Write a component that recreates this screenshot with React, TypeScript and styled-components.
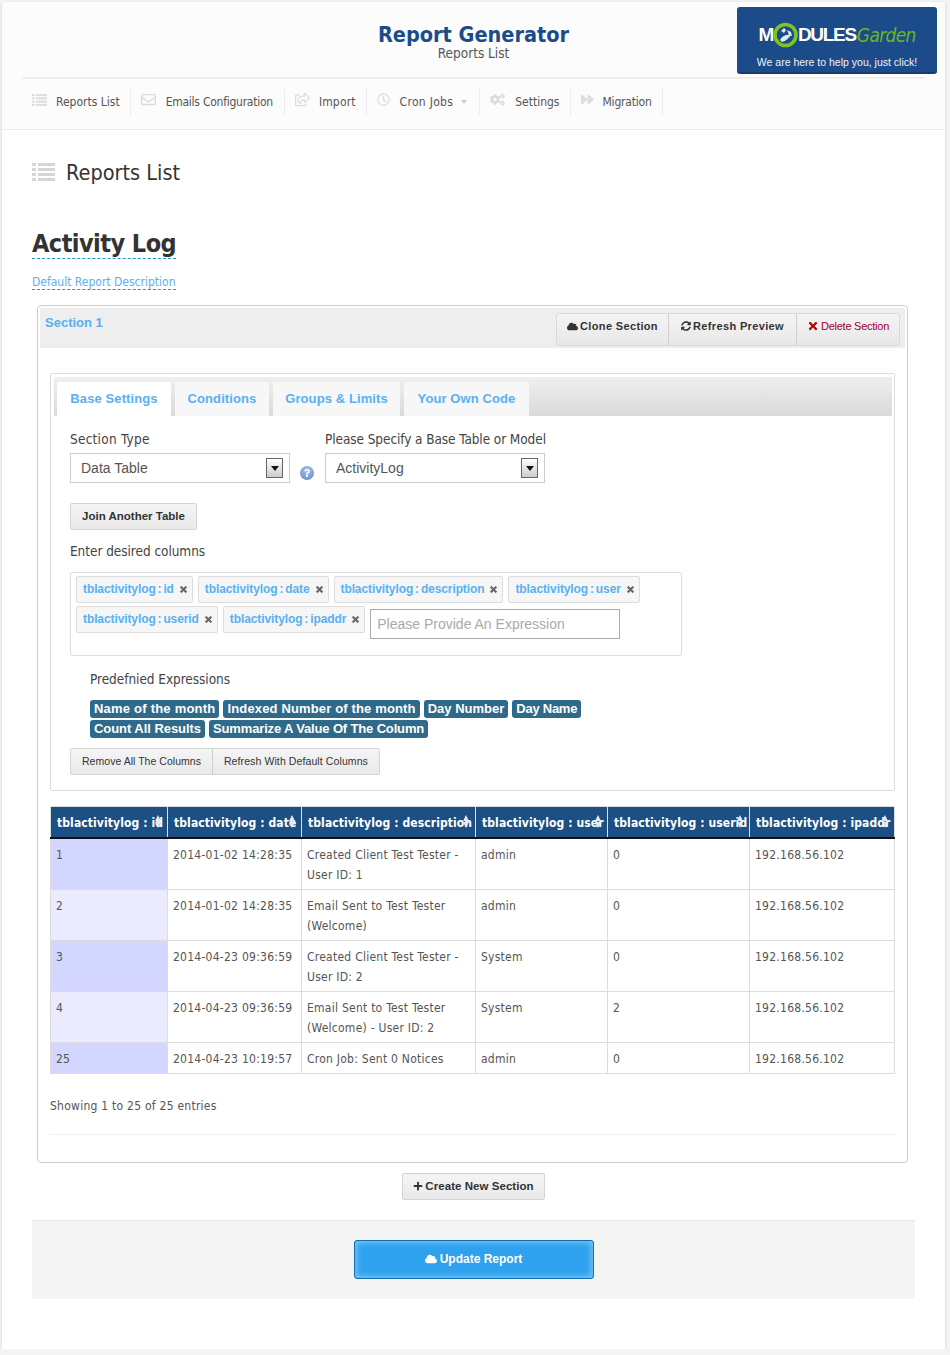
import React from 'react';
import styled, { createGlobalStyle } from 'styled-components';
import { FaRegEnvelope, FaRegShareSquare, FaRegClock, FaCogs, FaForward, FaCloud, FaSyncAlt, FaTimes, FaPlus, FaQuestion } from 'react-icons/fa';

const tahoma = `"DejaVu Sans Condensed", "DejaVu Sans", sans-serif`;
const arial = `"Liberation Sans", Arial, sans-serif`;

const Global = createGlobalStyle`
  html, body { margin: 0; padding: 0; background: #f4f4f4; }
  body { font-family: ${tahoma}; font-stretch: condensed; color: #444; font-size: 12px; }
  * { box-sizing: border-box; }
`;

const Page = styled.div`
  width: 943px; height: 1347px; margin: 2px 0 0 2px; background: #fff;
  box-shadow: 0 1px 3px rgba(0,0,0,.15); overflow: hidden;
`;
const Header = styled.header`
  height: 128px; background: #fcfcfc; border-bottom: 1px solid #ececec; padding: 0 20px;
`;
const TopRow = styled.div`
  height: 77px; border-bottom: 2px solid #efefef; position: relative; display: flex; flex-direction: column; align-items: center; padding-top: 22px;
`;
const AppTitle = styled.h1`
  margin: 0; font: bold 21.5px/22px ${tahoma}; font-stretch: condensed; color: #1c4c88;
`;
const AppSub = styled.div`
  font-size: 13.5px; line-height: 15px; color: #555; margin-top: 0;
`;
const Brand = styled.a`
  position: absolute; right: -12px; top: 5px; width: 200px; height: 67px; background: #1c4b8a; border-radius: 3px;
  border-bottom: 2px solid #173d70; display: flex; flex-direction: column; align-items: center; color: #fff;
`;
const LogoRow = styled.div`
  display: flex; align-items: center; height: 26px; margin-top: 15px; font: bold 19px/26px ${arial}; letter-spacing: -1.3px; color: #fff;
`;
const LogoGarden = styled.span`
  font: italic normal 19px/26px ${tahoma}; font-stretch: condensed; color: #6bb51d; letter-spacing: -0.7px; margin-left: 1px;
`;
const BrandText = styled.div`
  font: 10.5px/14px ${arial}; margin-top: 7px; color: #eef3fa;
`;
const Nav = styled.nav`
  display: flex; padding-top: 10px;
`;
const NavItem = styled.a<{ $ls?: number; $pr?: number }>`
  display: flex; align-items: center; height: 26px; padding: 0 ${p => p.$pr ?? 10}px 0 10px; border-right: 1px solid #ececec; color: #555; font-size: 12px;
  letter-spacing: ${p => p.$ls ?? 0}px;
  svg { color: #dcdcdc; flex: none; }
`;
const NavIcon = styled.span<{ $gap: number }>`
  display: flex; align-items: center; margin-right: ${p => p.$gap}px; margin-top: -5px;
`;
const Caret = styled.span`
  width: 0; height: 0; border: 3px solid transparent; border-top: 4px solid #ccc; margin: 3px 0 0 8px;
`;
const Content = styled.main`
  padding: 0 30px;
`;
const PageTitle = styled.h2`
  margin: 29px 0 0; display: flex; align-items: center; height: 26px; font-weight: normal; font-size: 21.5px; color: #333; gap: 11px;
  svg { color: #d6d6d6; }
`;
const ReportName = styled.h3`
  margin: 44px 0 0; width: max-content; font: bold 25px/29px ${tahoma}; font-stretch: condensed; color: #333; border-bottom: 1px dashed #1b95d8; letter-spacing: -0.55px; height: 30px;
`;
const ReportDesc = styled.div`
  margin-top: 16px; width: max-content; color: #5cb0f0; font-size: 12px; line-height: 14px; border-bottom: 1px dashed #1b95d8;
`;
const Section = styled.section`
  margin: 15px 0 0 5px; width: 871px; height: 858px; border: 1px solid #ccc; border-radius: 4px; padding: 2px 2px 0;
`;
const SectionHead = styled.div`
  height: 40px; width: 865px; background: #eee; display: flex; justify-content: space-between; padding: 5px 5px 0 5px;
`;
const SectionName = styled.span`
  font: bold 13px/20px ${arial}; color: #5ab0f0;
`;
const BtnGroup = styled.div`
  display: flex; height: 33px; border: 1px solid #d9d9d9; border-radius: 3px; background: linear-gradient(#f4f4f4, #e8e8e8);
`;
const GroupBtn = styled.button<{ $danger?: boolean; $w: number }>`
  width: ${p => p.$w}px; border: 0; border-left: 1px solid #d0d0d0; background: none; padding: 0 0 7px; height: 100%; display: flex; align-items: center; justify-content: center; gap: 2px;
  font: ${p => (p.$danger ? 'normal 11px' : 'bold 11px')} ${arial}; color: ${p => (p.$danger ? '#a4001f' : '#333')}; letter-spacing: ${p => (p.$danger ? '-0.25px' : '.35px')};
  &:first-child { border-left: 0; }
  svg { color: ${p => (p.$danger ? '#a80c0c' : '#333')}; }
`;
const Tabs = styled.div`
  margin: 25px 0 0 10px; width: 845px; height: 418px; border: 1px solid #ddd; border-radius: 2px; padding: 3px;
`;
const TabBar = styled.div`
  height: 39px; width: 838px; background: linear-gradient(#efefef, #d9d9d9); display: flex; gap: 4px; padding: 5px 0 0 3px;
`;
const Tab = styled.a<{ $active?: boolean; $w: number }>`
  width: ${p => p.$w}px; height: 34px; display: flex; align-items: center; justify-content: center; padding-bottom: 2px;
  background: ${p => (p.$active ? '#fff' : '#f7f7f7')}; font: bold 13px ${arial}; color: #5ab0f0; letter-spacing: .1px;
`;
const TabBody = styled.div`
  padding: 14px 0 0 16px;
`;
const FieldRow = styled.div`
  display: flex; align-items: flex-end;
`;
const Field = styled.div`
  display: flex; flex-direction: column; gap: 5px;
`;
const FieldLabel = styled.label<{ $ls: number }>`
  font-size: 13.5px; line-height: 18px; color: #444; letter-spacing: ${p => p.$ls}px;
`;
const SelectBox = styled.div`
  width: 220px; height: 30px; border: 1px solid #ccc; display: flex; align-items: center; justify-content: space-between; padding: 0 6px 0 10px;
  font: 14px ${arial}; color: #555;
`;
const SelectArrow = styled.span`
  width: 17px; height: 20px; border: 1px solid #666; background: linear-gradient(#fff, #ccc); display: flex; align-items: center; justify-content: center;
  &::after { content: ''; border: 4px solid transparent; border-top: 5px solid #111; margin-top: 4px; }
`;
const HelpDot = styled.span`
  width: 14px; height: 14px; border-radius: 50%; background: radial-gradient(circle at 50% 30%, #a8c4ea, #5b88c6); color: #fff; display: flex; align-items: center; justify-content: center; margin: 0 11px 3px 10px;
`;
const PlainBtn = styled.button`
  display: block; margin-top: 20px; width: 127px; height: 27px; border: 1px solid #d4d4d4; border-radius: 2px; background: linear-gradient(#f5f5f5, #e9e9e9);
  font: bold 11.5px ${arial}; color: #333; padding: 0 0 1px;
`;
const SubLabel = styled.div`
  font-size: 13.5px; line-height: 18px; color: #444; margin-top: 12px; letter-spacing: -.05px;
`;
const TagBox = styled.div`
  width: 612px; height: 84px; margin-top: 12px; border: 1px solid #ddd; border-radius: 2px; padding: 3px 5px; display: flex; flex-wrap: wrap; align-content: flex-start; gap: 3px 5px;
`;
const Tag = styled.span`
  height: 27px; display: flex; align-items: center; gap: 5px; padding: 0 4px 1px 6px; background: #f6f6f6; border: 1px solid #ddd; border-radius: 2px;
  font: bold 12px ${arial}; color: #5ab0f0; word-spacing: -1.3px; letter-spacing: -.1px;
  svg { color: #666; stroke: #666; stroke-width: 45; }
`;
const ExprInput = styled.div`
  width: 250px; height: 30px; margin-top: 3px; border: 1px solid #aaa; display: flex; align-items: center; padding-left: 6px; font: 14px ${arial}; color: #aaa;
`;
const Predefined = styled.div`
  padding-left: 20px; margin-top: 14px;
`;
const PredefTitle = styled.div`
  font-size: 13.5px; line-height: 18px; color: #444; letter-spacing: -.05px;
`;
const Badges = styled.div`
  margin-top: 12px; width: 520px; display: flex; flex-wrap: wrap; gap: 2px 4px;
`;
const Badge = styled.span<{ $ls: number }>`
  height: 18px; padding: 0 4px; border-radius: 3px; background: #2f6a8a; color: #fff; font: bold 13px/17px ${arial}; letter-spacing: ${p => p.$ls}px;
`;
const Pair = styled.div`
  display: flex; width: max-content; margin-top: 10px; height: 27px; border: 1px solid #d4d4d4; border-radius: 2px; background: linear-gradient(#f5f5f5, #e9e9e9);
`;
const PairBtn = styled.button<{ $ls: number }>`
  border: 0; background: none; padding: 0 11px 2px; font: 10.5px ${arial}; color: #333; letter-spacing: ${p => p.$ls}px;
  & + & { border-left: 1px solid #d0d0d0; }
`;
const Table = styled.table`
  margin: 15px 0 0 10px; width: 844px; border-collapse: collapse; table-layout: fixed; font-size: 12px; letter-spacing: .25px;
  td { border: 1px solid #ddd; padding: 6px 5px 4px; line-height: 20px; vertical-align: top; color: #555; }
`;
const Th = styled.th`
  height: 31px; background: #1c4f83; color: #fff; text-align: left; padding: 2px 6px 0; font: bold 12px ${tahoma}; font-stretch: condensed; letter-spacing: .1px; border: 1px solid #d8e0e8; border-bottom: 2px solid #111; border-top-color: #ddd;
  white-space: nowrap; overflow: hidden; position: relative;
`;
const SortMark = styled.span`
  position: absolute; right: 6px; top: 8px; width: 7px; height: 14px; display: flex; flex-direction: column; align-items: center; gap: 1px;
  &::before { content: ''; border: 3.5px solid transparent; border-top: 0; border-bottom: 6px solid #e4e9f0; }
  &::after { content: ''; border: 3.5px solid transparent; border-bottom: 0; border-top: 6px solid #e4e9f0; }
`;
const IdCell = styled.td<{ $odd: boolean }>`
  background: ${p => (p.$odd ? '#d3d6ff' : '#eaebff')};
`;
const Info = styled.div`
  margin: 24px 0 0 10px; font-size: 12px; line-height: 16px; color: #555; letter-spacing: .25px;
`;
const Rule = styled.hr`
  margin: 20px 0 0 10px; width: 845px; border: 0; border-top: 1px solid #eee;
`;
const CreateRow = styled.div`
  display: flex; justify-content: center; width: 883px; margin-top: 10px;
`;
const CreateBtn = styled.button`
  width: 143px; height: 27px; border: 1px solid #d4d4d4; border-radius: 2px; background: linear-gradient(#f5f5f5, #e9e9e9);
  display: flex; align-items: center; justify-content: center; gap: 2px; font: bold 11.5px ${arial}; color: #333; letter-spacing: .05px; padding: 0 0 2px;
`;
const Footer = styled.div`
  margin-top: 20px; width: 883px; height: 79px; background: #f4f4f4; border-top: 1px solid #e8e8e8; display: flex; justify-content: center; padding-top: 19px;
`;
const PrimaryBtn = styled.button`
  width: 240px; height: 39px; border: 1px solid #0f6fb0; border-radius: 3px; background: #2ea2ee; box-shadow: inset 0 0 6px 1px rgba(255,255,255,.45);
  display: flex; align-items: center; justify-content: center; gap: 3px; color: #fff; font: bold 12px ${arial}; padding: 0 0 1px;
`;

const tags = ['id', 'date', 'description', 'user', 'userid', 'ipaddr'];
const badges: [string, number][] = [
  ['Name of the month', 0.22],
  ['Indexed Number of the month', 0.15],
  ['Day Number', 0],
  ['Day Name', -0.25],
  ['Count All Results', -0.05],
  ['Summarize A Value Of The Column', -0.15],
];
const cols = [
  { name: 'tblactivitylog : id', w: 117 },
  { name: 'tblactivitylog : date', w: 134 },
  { name: 'tblactivitylog : description', w: 174 },
  { name: 'tblactivitylog : user', w: 132 },
  { name: 'tblactivitylog : userid', w: 142 },
  { name: 'tblactivitylog : ipaddr', w: 145 },
];
const rows: [string, string, React.ReactNode, string, string][] = [
  ['1', '2014-01-02 14:28:35', <>Created Client Test Tester -<br />User ID: 1</>, 'admin', '0'],
  ['2', '2014-01-02 14:28:35', <>Email Sent to Test Tester<br />(Welcome)</>, 'admin', '0'],
  ['3', '2014-04-23 09:36:59', <>Created Client Test Tester -<br />User ID: 2</>, 'System', '0'],
  ['4', '2014-04-23 09:36:59', <>Email Sent to Test Tester<br />(Welcome) - User ID: 2</>, 'System', '2'],
  ['25', '2014-04-23 10:19:57', 'Cron Job: Sent 0 Notices', 'admin', '0'],
];

const ListIcon = ({ w, h }: { w: number; h: number }) => (
  <svg width={w} height={h} viewBox="0 0 23 18" fill="currentColor">
    {[0, 5, 10, 15].map(y => (
      <g key={y}>
        <rect x="0" y={y} width="4" height="3" />
        <rect x="6" y={y} width="17" height="3" />
      </g>
    ))}
  </svg>
);

const LogoRing = () => (
  <svg width="25" height="26" viewBox="0 0 25 26">
    <circle cx="12.5" cy="13" r="10.5" fill="#1c4b8a" stroke="#7cc520" strokeWidth="3.6" />
    <path d="M8 9l3-3 2 2-2 3zM14 8l4 2 1 4-3-1zM7 18c2-4 6-6 11-5-2 3-5 6-9 7z" fill="#dfe8f3" />
  </svg>
);

export default function App() {
  return (
    <>
      <Global />
      <Page>
        <Header>
          <TopRow>
            <AppTitle>Report Generator</AppTitle>
            <AppSub>Reports List</AppSub>
            <Brand>
              <LogoRow>M<LogoRing />DULES<LogoGarden>Garden</LogoGarden></LogoRow>
              <BrandText>We are here to help you, just click!</BrandText>
            </Brand>
          </TopRow>
          <Nav>
            <NavItem><NavIcon $gap={9}><ListIcon w={15} h={12} /></NavIcon>Reports List</NavItem>
            <NavItem $ls={-0.25} $pr={11}><NavIcon $gap={10}><FaRegEnvelope size={15} /></NavIcon>Emails Configuration</NavItem>
            <NavItem $ls={0.15}><NavIcon $gap={9}><FaRegShareSquare size={15} /></NavIcon>Import</NavItem>
            <NavItem $ls={0.3} $pr={12}><NavIcon $gap={10}><FaRegClock size={13} /></NavIcon>Cron Jobs<Caret /></NavItem>
            <NavItem $pr={11}><NavIcon $gap={10}><FaCogs size={15} /></NavIcon>Settings</NavItem>
            <NavItem $ls={-0.2}><NavIcon $gap={8}><FaForward size={13} /></NavIcon>Migration</NavItem>
          </Nav>
        </Header>
        <Content>
          <PageTitle><ListIcon w={23} h={18} />Reports List</PageTitle>
          <ReportName>Activity Log</ReportName>
          <ReportDesc>Default Report Description</ReportDesc>
          <Section>
            <SectionHead>
              <SectionName>Section 1</SectionName>
              <BtnGroup>
                <GroupBtn $w={111}><FaCloud size={11} />Clone Section</GroupBtn>
                <GroupBtn $w={128}><FaSyncAlt size={10} />Refresh Preview</GroupBtn>
                <GroupBtn $danger $w={103}><FaTimes size={12} />Delete Section</GroupBtn>
              </BtnGroup>
            </SectionHead>
            <Tabs>
              <TabBar>
                <Tab $active $w={114}>Base Settings</Tab>
                <Tab $w={94}>Conditions</Tab>
                <Tab $w={127}>Groups &amp; Limits</Tab>
                <Tab $w={125}>Your Own Code</Tab>
              </TabBar>
              <TabBody>
                <FieldRow>
                  <Field>
                    <FieldLabel $ls={0.25}>Section Type</FieldLabel>
                    <SelectBox>Data Table<SelectArrow /></SelectBox>
                  </Field>
                  <HelpDot><FaQuestion size={8} /></HelpDot>
                  <Field>
                    <FieldLabel $ls={-0.08}>Please Specify a Base Table or Model</FieldLabel>
                    <SelectBox>ActivityLog<SelectArrow /></SelectBox>
                  </Field>
                </FieldRow>
                <PlainBtn>Join Another Table</PlainBtn>
                <SubLabel>Enter desired columns</SubLabel>
                <TagBox>
                  {tags.map(t => (
                    <Tag key={t}>tblactivitylog : {t}<FaTimes size={9} /></Tag>
                  ))}
                  <ExprInput>Please Provide An Expression</ExprInput>
                </TagBox>
                <Predefined>
                  <PredefTitle>Predefnied Expressions</PredefTitle>
                  <Badges>
                    {badges.map(([text, ls]) => <Badge key={text} $ls={ls}>{text}</Badge>)}
                  </Badges>
                </Predefined>
                <Pair>
                  <PairBtn $ls={0.03}>Remove All The Columns</PairBtn>
                  <PairBtn $ls={0.1}>Refresh With Default Columns</PairBtn>
                </Pair>
              </TabBody>
            </Tabs>
            <Table>
              <colgroup>{cols.map(c => <col key={c.name} style={{ width: c.w }} />)}</colgroup>
              <thead>
                <tr>{cols.map(c => <Th key={c.name}>{c.name}<SortMark /></Th>)}</tr>
              </thead>
              <tbody>
                {rows.map((r, i) => (
                  <tr key={r[0]}>
                    <IdCell $odd={i % 2 === 0}>{r[0]}</IdCell>
                    <td>{r[1]}</td>
                    <td>{r[2]}</td>
                    <td>{r[3]}</td>
                    <td>{r[4]}</td>
                    <td>192.168.56.102</td>
                  </tr>
                ))}
              </tbody>
            </Table>
            <Info>Showing 1 to 25 of 25 entries</Info>
            <Rule />
          </Section>
          <CreateRow><CreateBtn><FaPlus size={10} />Create New Section</CreateBtn></CreateRow>
          <Footer><PrimaryBtn><FaCloud size={12} />Update Report</PrimaryBtn></Footer>
        </Content>
      </Page>
    </>
  );
}
